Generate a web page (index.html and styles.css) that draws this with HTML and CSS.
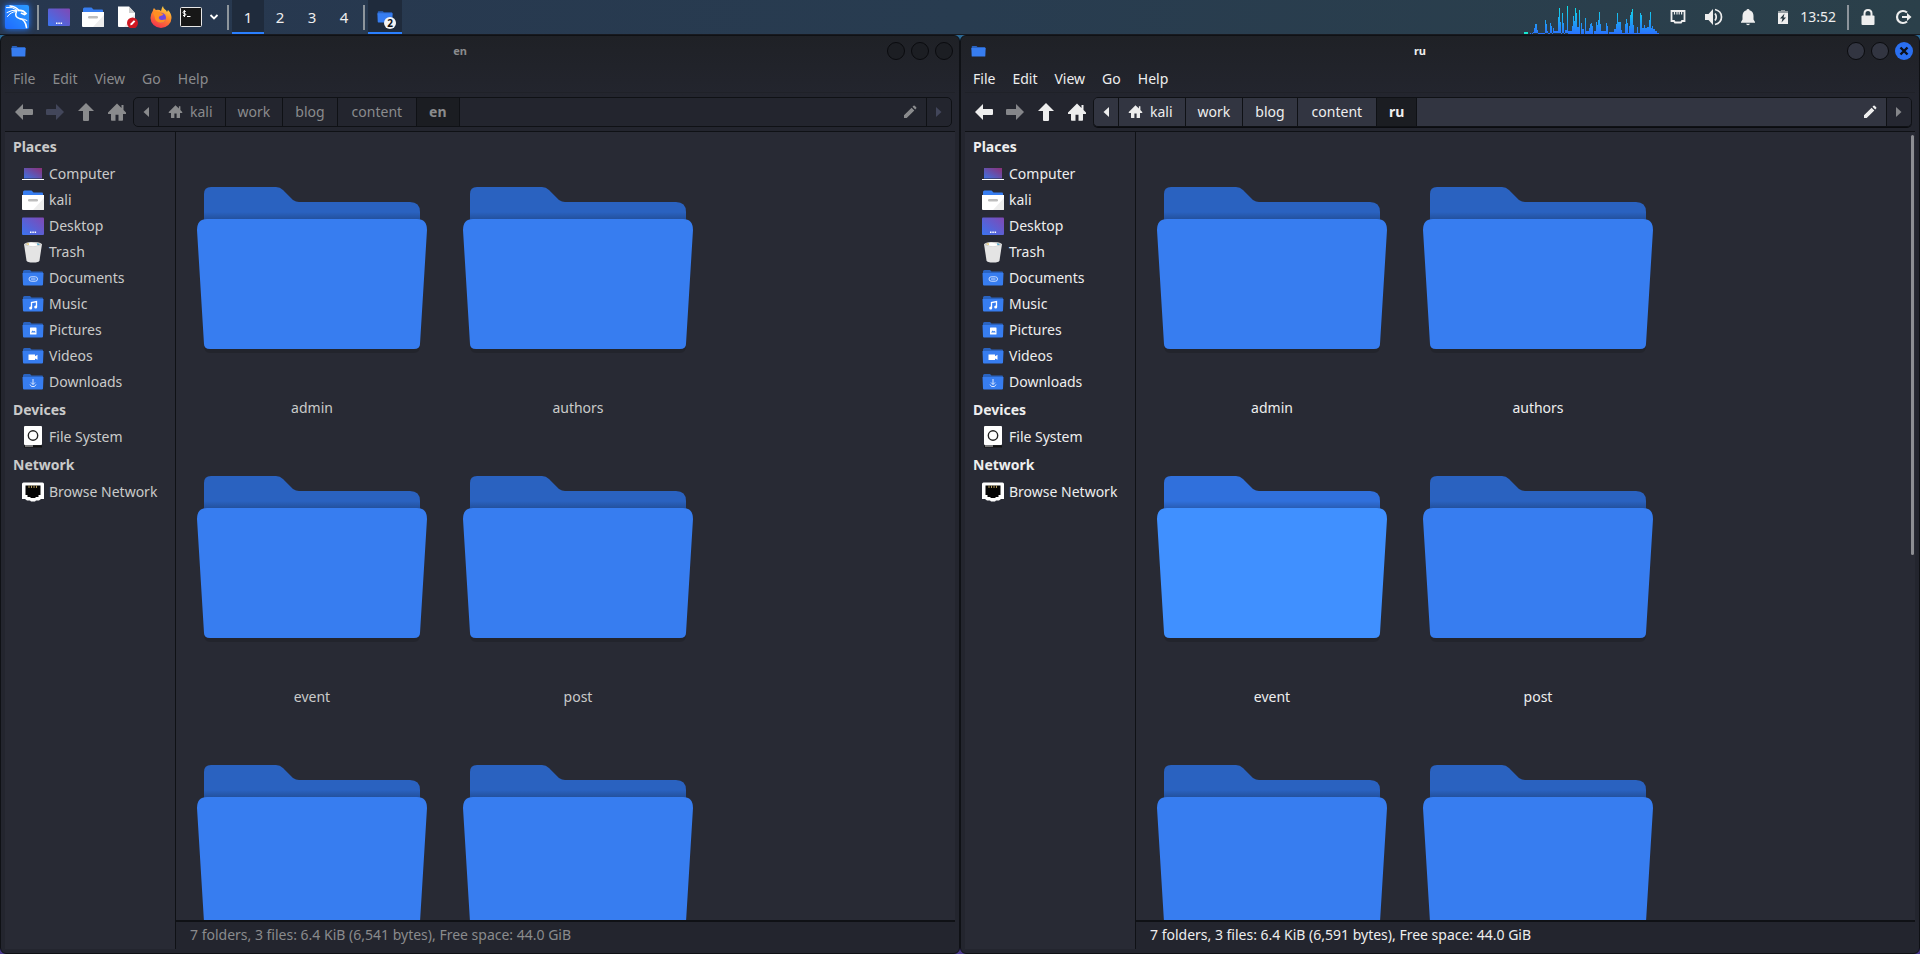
FILE: index.html
```
<!DOCTYPE html>
<html lang="en">
<head>
<meta charset="utf-8">
<title>Desktop</title>
<link rel="stylesheet" href="styles.css">
</head>
<body>
<svg class="defs" aria-hidden="true">
  <defs>
    <linearGradient id="g-desk" x1="0" y1="1" x2="1" y2="0"><stop offset="0" stop-color="#3a74f0"/><stop offset="1" stop-color="#8148b4"/></linearGradient>
    <linearGradient id="g-comp" x1="0" y1="1" x2="1" y2="0"><stop offset="0" stop-color="#3d72e0"/><stop offset="1" stop-color="#8e2f78"/></linearGradient>
    <linearGradient id="g-kali" x1="0" y1="1" x2="1" y2="0"><stop offset="0" stop-color="#1f6bff"/><stop offset="1" stop-color="#2b9bff"/></linearGradient>
    <linearGradient id="g-fox" x1="0.8" y1="0" x2="0.3" y2="1"><stop offset="0" stop-color="#ffe14a"/><stop offset="0.45" stop-color="#ff8a2a"/><stop offset="1" stop-color="#f5304f"/></linearGradient>
    <linearGradient id="g-cpu" gradientUnits="userSpaceOnUse" x1="0" y1="6" x2="0" y2="34"><stop offset="0" stop-color="#0fe0e6"/><stop offset="1" stop-color="#2a72ff"/></linearGradient>
    <linearGradient id="g-shade" x1="0" y1="0" x2="0" y2="1"><stop offset="0" stop-color="#000" stop-opacity="0"/><stop offset="1" stop-color="#000" stop-opacity="0.2"/></linearGradient>
  </defs>
  <symbol id="folder" viewBox="0 0 256 256">
    <path d="M20 190v16q0 7 6 7H230q6 0 6-7v-16z" fill="#000" opacity=".14"/>
    <path class="back" d="M20 90V54q0-7 7-7H92q4 0 7 3L109 60q3 2 6 2H226q10 0 10 10V90z"/>
    <path d="M20 72H236V80H20z" fill="url(#g-shade)"/>
    <path class="front" d="M23 79H233Q243 79 243 90L236 204Q236 209 230 209H26Q20 209 20 204L13 90Q13 79 23 79z"/>
  </symbol>
  <symbol id="mini" viewBox="0 0 22 22"><path d="M1 4.500q0-1.500 1.500-1.500H8l1.500 1.500H20q1 0 1 1V8H1z" fill="#2a63c0"/><path d="M.5 6H21.500L21 17.500q0 1-1 1H2q-1 0-1-1z" fill="#377df0"/></symbol>
  <symbol id="computer" viewBox="0 0 22 22"><path d="M2 5H20V15.500H2z" fill="url(#g-comp)"/><path d="M0 16H22V17H0z" fill="#fff"/></symbol>
  <symbol id="homefolder" viewBox="0 0 22 22"><path d="M1 3q0-1.500 1.500-1.500H9.500L11.500 3.500H20q1 0 1 1V8H1z" fill="#377df0"/><path d="M0 6H22V20q0 1-1 1H1q-1 0-1-1z" fill="#fff"/><path d="M22 9V20q0 1-1 1H11z" fill="#ededed"/><rect x="6" y="10" width="10" height="2.400" rx="1.200" fill="#bdbdbd"/></symbol>
  <symbol id="desktop" viewBox="0 0 22 22"><rect x="0" y="2.500" width="22" height="17.500" rx="1" fill="url(#g-desk)"/><path d="M8 16.500h1.500v1.500H8zM10.300 16.500h1.500v1.500h-1.500zM12.600 16.500h1.500v1.500h-1.500z" fill="#fff"/></symbol>
  <symbol id="trash" viewBox="0 0 22 22"><path d="M2 3Q11-1 20 3L17.500 19.500q-.5 2-6.500 2t-6.500-2z" fill="#e4e4e4"/><ellipse cx="11" cy="3.200" rx="8.500" ry="2.300" fill="#c9c9c9"/><path d="M4.500 3.200q2-2 6-1.500t7 1.500q-2 2-6.500 2t-6.500-2z" fill="#fff"/><path d="M4 3l2.500-1 .5 2z" fill="#e8c860"/><path d="M15 2.300l3 .9-2.500 1z" fill="#3f9fc8"/></symbol>
  <symbol id="documents" viewBox="0 0 22 22"><use href="#mini"/><rect x="7" y="9.800" width="8.500" height="4.400" rx="2.200" fill="none" stroke="#cfe0ff"/><path d="M9 12h4.500" stroke="#cfe0ff"/></symbol>
  <symbol id="music" viewBox="0 0 22 22"><use href="#mini"/><path d="M9.500 15V9.500l5-1V14" fill="none" stroke="#fff" stroke-width="1.300"/><circle cx="8.700" cy="15" r="1.500" fill="#fff"/><circle cx="13.700" cy="14" r="1.500" fill="#fff"/></symbol>
  <symbol id="pictures" viewBox="0 0 22 22"><use href="#mini"/><rect x="8" y="8.500" width="6.500" height="7" rx=".5" fill="#fff"/><path d="M9 13.500l1.700-2 1.200 1 .8-.7 1 1.700z" fill="#377df0"/></symbol>
  <symbol id="videos" viewBox="0 0 22 22"><use href="#mini"/><path d="M6.500 9.500h6.500v1.700l2.500-1.400v5L13 13.400V15H6.500z" fill="#fff"/></symbol>
  <symbol id="downloads" viewBox="0 0 22 22"><use href="#mini"/><path d="M11 8v5.500M9 11.500l2 2 2-2M8 13.500l1.500 2h3l1.500-2" fill="none" stroke="#dbe8ff"/></symbol>
  <symbol id="drive" viewBox="0 0 22 22"><rect x="2" y="0" width="18" height="19" rx="1" fill="#fff"/><circle cx="11" cy="9.500" r="4.700" fill="none" stroke="#222" stroke-width="1.400"/><path d="M2 19.500H20V21.500H2z" fill="#111"/><path d="M3 20h8" stroke="#ddd"/></symbol>
  <symbol id="netfolder" viewBox="0 0 22 22"><path d="M1.500 1.500h19q1.500 0 1.500 1.500V18h-3l-2 1.500h-3L13 20.500H9l-1-1H5L3 18H0V3Q0 1.500 1.500 1.500z" fill="#fff"/><path d="M3.500 4.500h15V14h-2v2h-3v1h-5v-1h-3v-2h-2z" fill="#050505"/><path d="M7 4.500v2.500M9.500 4.500v2.500M12 4.500v2.500M14.500 4.500v2.500" stroke="#d8b96a" stroke-width=".8"/></symbol>
  <symbol id="arrow" viewBox="0 0 20 20"><path d="M1 10L9 2v5h9q1 0 1 1v4q0 1-1 1H9v5z"/></symbol>
  <symbol id="house" viewBox="0 0 20 20"><path d="M10 1.500L1 10.500V12h3v6q0 .8.800.8H8.500v-6h3v6h3.700q.8 0 .8-.8v-6h3v-1.500L16.500 8V3h-2v3z"/></symbol>
  <symbol id="pencil" viewBox="0 0 14 14"><path d="M1 13V10.300L8.600 2.700l2.700 2.700L3.700 13zM9.500 1.800l1-1q.6-.5 1.200 0l1.500 1.500q.5.600 0 1.200l-1 1z"/></symbol>
  <symbol id="tri" viewBox="0 0 6 10"><path d="M0 0L5.500 5 0 10z"/></symbol>
</svg>

<header class="panel">
  <button class="kali" aria-label="Applications"><svg viewBox="0 0 26 26"><rect x="1" y="1" width="24" height="24" rx="2" fill="url(#g-kali)"/><g fill="none" stroke="#fff" stroke-linecap="round"><path d="M2.500 3.500q6-1 10.500 2.500M3 8.500q5-3 10-2M3.500 12.500q3-4.500 8.500-5" stroke-width="1"/><path d="M6 2q6 .5 9 4.500" stroke-width="1.400"/><path d="M14.500 6.500q4.500-.8 7.500 3l-1.500 1-3-1.200" stroke-width="1.700"/><path d="M12.500 7.500q-2.500 5.500 3 7 6 1 7 9" stroke-width="1.600"/><path d="M16 14.800q5 0 7 1.700" stroke-width="1"/></g></svg></button>
  <span class="rule"></span>
  <nav class="launch" aria-label="Launchers">
    <button aria-label="Show desktop"><svg><use href="#desktop"/></svg></button>
    <button aria-label="File manager"><svg><use href="#homefolder"/></svg></button>
    <button aria-label="Text editor"><svg viewBox="0 0 22 22"><path d="M2 .5H13L19 7V20q0 1-1 1H3q-1 0-1-1z" fill="#fff"/><path d="M13 .5L19 7h-6z" fill="#cfcfcf"/><path d="M19 8V20q0 1-1 1H8z" fill="#ececec"/><circle cx="16.500" cy="17" r="5.500" fill="#cf1822"/><path d="M14.300 19.200l.3-1.700 3.300-3.300 1.400 1.400-3.300 3.300z" fill="#fff"/></svg></button>
    <button aria-label="Firefox"><svg viewBox="0 0 22 22"><path d="M13 0q0 2 2 3.500 1.500.8 2 2.500l1-2q3.500 3.500 3.500 8a10.500 10 0 0 1-21 0Q.5 8 3 4.500q0-1.500 1-2.500 1 1.500 2 2 3-1 5 1Q11.500 2 13 0z" fill="url(#g-fox)"/><circle cx="11" cy="11.800" r="5" fill="#6d48e0"/><path d="M3 6.500q4-2 8 .5l2.500 1q-.5 1.500-2.500 1.700-2.500.3-2.300 2.300.8 2.500 3.500 2 2-.8 3.500-.5-1.500 3.500-5.500 3.200-5.500-1-5.500-6-1-2-1.700-4.200z" fill="#ff8f22"/></svg></button>
    <button class="term" aria-label="Terminal"><svg viewBox="0 0 22 22"><rect x=".5" y="1.500" width="21" height="19" rx="1" fill="#171717" stroke="#e8e8e8"/><g fill="none" stroke="#fff"><path d="M5.800 5.500Q3 4.700 3 6.300q0 1.200 1.400 1.200T5.800 8.800Q5.500 10.200 3 9.500M4.400 4v7M7 10.500h3.500"/></g></svg></button>
    <button class="more" aria-label="More terminals"><svg viewBox="0 0 10 6"><path d="M1.500 1L5 4.500 8.500 1" fill="none" stroke="#fff" stroke-width="1.800"/></svg></button>
  </nav>
  <span class="rule"></span>
  <nav class="spaces" aria-label="Workspaces"><button class="on">1</button><button>2</button><button>3</button><button>4</button></nav>
  <span class="rule"></span>
  <button class="task on" aria-label="File windows"><svg><use href="#mini"/></svg><span class="badge">2</span></button>

  <div class="tray">
    <svg class="graph" viewBox="0 0 135 34" role="img" aria-label="CPU load"><path d="M0 32h4v2H0z" fill="#18e6d0"/><path fill="url(#g-cpu)" d="M6 33h1v1H6zM8 33V34H44V33H8zM9 32h1v2H9zM10 28h1v6h-1zM11 24h2v10h-2zM13 30h1v4h-1zM21 20h1v14h-1zM22 24h1v10h-1zM23 31h1v3h-1zM26 23h1v11h-1zM27 26h1v8h-1zM29 28h1v6h-1zM30 31h4v3h-4zM34 17h1v17h-1zM35 8h1v26h-1zM36 22h1v12h-1zM38 13h1v21h-1zM39 23h1v11h-1zM41 30h2v4h-2zM43 6h1v28h-1zM44 31h4v3h-4zM48 26h1v8h-1zM49 16h1v18h-1zM50 21h1v13h-1zM51 8h1v26h-1zM52 13h1v21h-1zM53 27h2v7h-2zM55 10h1v24h-1zM57 23h1v11h-1zM58 29h2v5h-2zM61 18h1v16h-1zM62 31h3v3h-3zM65 28h1v6h-1zM66 24h1v10h-1zM67 23h1v11h-1zM68 26h1v8h-1zM70 31h2v3h-2zM72 22h1v12h-1zM73 25h1v9h-1zM74 20h1v14h-1zM75 12h1v22h-1zM76 24h1v10h-1zM77 31h5v3h-5zM82 23h1v11h-1zM83 26h1v8h-1zM85 32h7v2h-7zM90 29h2v5h-2zM92 24h1v10h-1zM93 13h1v21h-1zM94 22h3v12h-3zM97 30h1v4h-1zM101 24h1v10h-1zM102 19h1v15h-1zM103 23h1v11h-1zM105 26h1v8h-1zM106 15h1v19h-1zM107 12h1v22h-1zM108 9h1v25h-1zM109 25h1v9h-1zM113 27h1v7h-1zM116 13h1v21h-1zM117 15h1v19h-1zM118 28h2v6h-2zM120 25h1v9h-1zM121 28h2v6h-2zM123 27h2v7h-2zM125 20h1v14h-1zM126 12h1v22h-1zM127 28h1v6h-1zM128 26h1v8h-1zM129 29h2v5h-2zM131 31h2v3h-2zM133 33h2v1h-2zM96 33h30v1H96z"/></svg>
    <button aria-label="Network"><svg viewBox="0 0 20 20"><path d="M3.500 4h13v10H14l-1 1.500H7L6 14H3.500z" fill="none" stroke="#eee" stroke-width="1.800"/><path d="M6.500 4v3.500M9 4v3.500M11.200 4v3.500M13.600 4v3.500" stroke="#eee" stroke-width="1.200"/></svg></button>
    <button aria-label="Volume"><svg viewBox="0 0 20 20"><path d="M2 7h3.500L10 2v16l-4.500-5H2z" fill="#eee"/><path d="M12 6.500q2.500 3.500 0 7M12 2.500q6.500 1.500 6.500 7.500T12 17.500" fill="none" stroke="#eee" stroke-width="1.700"/></svg></button>
    <button aria-label="Notifications"><svg viewBox="0 0 20 20"><path d="M10 2q1.500 0 1.500 1.300Q15.500 4.500 15.500 9v3.500L17 15v.8H3V15l1.500-2.500V9q0-4.500 4-5.700Q8.500 2 10 2zM8 16.800h4q-.5 1.400-2 1.400t-2-1.400z" fill="#eee"/></svg></button>
    <button aria-label="Battery"><svg viewBox="0 0 20 20"><path d="M8 3h4v1.500h3V17H5V4.500h3z" fill="#eee"/><path d="M5 4.500h3V3h4v1.500h3V6H5z" fill="#939ba0"/><path d="M11.500 6.500L7 11.500h2.500L8.500 15.500l4.500-5h-2.500z" fill="#26363f"/></svg></button>
    <time class="clock">13:52</time>
    <span class="rule"></span>
    <button aria-label="Lock"><svg viewBox="0 0 20 20"><path d="M6.500 9V6.500q0-3.500 3.500-3.500t3.500 3.500V9" fill="none" stroke="#eee" stroke-width="2"/><rect x="3.500" y="8.500" width="13" height="9.500" rx="1" fill="#eee"/></svg></button>
    <button aria-label="Log out"><svg viewBox="0 0 20 20"><path d="M14 5.500A6 6 0 1 0 14 14.500" fill="none" stroke="#eee" stroke-width="2.200"/><path d="M9 9h5V6l4.500 4-4.500 4v-3H9z" fill="#eee"/></svg></button>
  </div>
</header>

<main class="screen">
  <section class="window idle">
    <header class="title"><svg class="app"><use href="#mini"/></svg><h1>en</h1><div class="controls"><button aria-label="Minimize"></button><button aria-label="Maximize"></button><button aria-label="Close"></button></div></header>
    <nav class="menu"><button>File</button><button>Edit</button><button>View</button><button>Go</button><button>Help</button></nav>
    <div class="tools">
      <div class="nav"><button aria-label="Back"><svg><use href="#arrow"/></svg></button><button class="off" aria-label="Forward"><svg class="flip"><use href="#arrow"/></svg></button><button aria-label="Up"><svg class="up"><use href="#arrow"/></svg></button><button aria-label="Home"><svg><use href="#house"/></svg></button></div>
      <div class="path"><button class="step" aria-label="Scroll left"><svg class="tri flip"><use href="#tri"/></svg></button><button class="first"><svg><use href="#house"/></svg>kali</button><button>work</button><button>blog</button><button class="wide">content</button><button class="here">en</button><button class="edit" aria-label="Edit path"><svg><use href="#pencil"/></svg></button><button class="step off" aria-label="Scroll right"><svg class="tri"><use href="#tri"/></svg></button></div>
    </div>
    <div class="body">
      <aside class="side">
        <h2>Places</h2>
        <a href="#"><svg><use href="#computer"/></svg>Computer</a>
        <a href="#"><svg><use href="#homefolder"/></svg>kali</a>
        <a href="#"><svg><use href="#desktop"/></svg>Desktop</a>
        <a href="#"><svg><use href="#trash"/></svg>Trash</a>
        <a href="#"><svg><use href="#documents"/></svg>Documents</a>
        <a href="#"><svg><use href="#music"/></svg>Music</a>
        <a href="#"><svg><use href="#pictures"/></svg>Pictures</a>
        <a href="#"><svg><use href="#videos"/></svg>Videos</a>
        <a href="#"><svg><use href="#downloads"/></svg>Downloads</a>
        <h2>Devices</h2>
        <a href="#"><svg><use href="#drive"/></svg>File System</a>
        <h2>Network</h2>
        <a href="#"><svg><use href="#netfolder"/></svg>Browse Network</a>
      </aside>
      <div class="content">
        <div class="files">
          <a href="#" class="file"><svg><use href="#folder"/></svg>admin</a>
          <a href="#" class="file"><svg><use href="#folder"/></svg>authors</a>
          <a href="#" class="file"><svg><use href="#folder"/></svg>event</a>
          <a href="#" class="file"><svg><use href="#folder"/></svg>post</a>
          <a href="#" class="file" aria-label="Folder"><svg><use href="#folder"/></svg></a>
          <a href="#" class="file" aria-label="Folder"><svg><use href="#folder"/></svg></a>
        </div>
        <footer class="status">7 folders, 3 files: 6.4 KiB (6,541 bytes), Free space: 44.0 GiB</footer>
      </div>
    </div>
  </section>

  <section class="window active">
    <header class="title"><svg class="app"><use href="#mini"/></svg><h1>ru</h1><div class="controls"><button aria-label="Minimize"></button><button aria-label="Maximize"></button><button class="close" aria-label="Close"><svg viewBox="0 0 18 18"><path d="M5.500 5.500l7 7M12.500 5.500l-7 7" stroke="#0c1018" stroke-width="2.400"/></svg></button></div></header>
    <nav class="menu"><button>File</button><button>Edit</button><button>View</button><button>Go</button><button>Help</button></nav>
    <div class="tools">
      <div class="nav"><button aria-label="Back"><svg><use href="#arrow"/></svg></button><button class="off" aria-label="Forward"><svg class="flip"><use href="#arrow"/></svg></button><button aria-label="Up"><svg class="up"><use href="#arrow"/></svg></button><button aria-label="Home"><svg><use href="#house"/></svg></button></div>
      <div class="path"><button class="step" aria-label="Scroll left"><svg class="tri flip"><use href="#tri"/></svg></button><button class="first"><svg><use href="#house"/></svg>kali</button><button>work</button><button>blog</button><button class="wide">content</button><button class="here">ru</button><button class="edit" aria-label="Edit path"><svg><use href="#pencil"/></svg></button><button class="step off" aria-label="Scroll right"><svg class="tri"><use href="#tri"/></svg></button></div>
    </div>
    <div class="body">
      <aside class="side">
        <h2>Places</h2>
        <a href="#"><svg><use href="#computer"/></svg>Computer</a>
        <a href="#"><svg><use href="#homefolder"/></svg>kali</a>
        <a href="#"><svg><use href="#desktop"/></svg>Desktop</a>
        <a href="#"><svg><use href="#trash"/></svg>Trash</a>
        <a href="#"><svg><use href="#documents"/></svg>Documents</a>
        <a href="#"><svg><use href="#music"/></svg>Music</a>
        <a href="#"><svg><use href="#pictures"/></svg>Pictures</a>
        <a href="#"><svg><use href="#videos"/></svg>Videos</a>
        <a href="#"><svg><use href="#downloads"/></svg>Downloads</a>
        <h2>Devices</h2>
        <a href="#"><svg><use href="#drive"/></svg>File System</a>
        <h2>Network</h2>
        <a href="#"><svg><use href="#netfolder"/></svg>Browse Network</a>
      </aside>
      <div class="content">
        <div class="files">
          <a href="#" class="file"><svg><use href="#folder"/></svg>admin</a>
          <a href="#" class="file"><svg><use href="#folder"/></svg>authors</a>
          <a href="#" class="file lit"><svg><use href="#folder"/></svg>event</a>
          <a href="#" class="file"><svg><use href="#folder"/></svg>post</a>
          <a href="#" class="file" aria-label="Folder"><svg><use href="#folder"/></svg></a>
          <a href="#" class="file" aria-label="Folder"><svg><use href="#folder"/></svg></a>
          <span class="thumb"></span>
        </div>
        <footer class="status">7 folders, 3 files: 6.4 KiB (6,591 bytes), Free space: 44.0 GiB</footer>
      </div>
    </div>
  </section>
</main>
</body>
</html>
```
FILE: styles.css
```
* { box-sizing: border-box; margin: 0; }
body {
  height: 100vh;
  display: flex;
  flex-direction: column;
  overflow: hidden;
  background: linear-gradient(#2a6a94, #4a3a8c);
  font: 14px/20px "Noto Sans", sans-serif;
  color: #eee;
}
button { border: 0; padding: 0; background: none; color: inherit; font: inherit; display: flex; align-items: center; justify-content: center; }
a { color: inherit; text-decoration: none; }
svg { display: block; flex: none; width: 22px; height: 22px; }
.defs { position: absolute; width: 0; height: 0; }

/* top panel */
.panel { height: 35px; flex: none; display: flex; align-items: stretch; border-bottom: 1px solid #17191f; background: linear-gradient(90deg, #27374f, #283c50 50%, #2b404a); }
.panel .rule { width: 2px; height: 25px; align-self: center; background: #8d959c; }
.kali { width: 34px; margin-right: 3px; }
.kali svg { width: 26px; height: 26px; filter: drop-shadow(0 0 3px #2277ff); }
.launch { display: flex; padding-left: 9px; gap: 12px; margin-right: 8px; }
.launch .term { margin-left: -4px; }
.launch .more { width: 10px; margin-left: -5px; }
.launch .more svg { width: 10px; height: 6px; }
.spaces { display: flex; margin: 0 3px; }
.spaces button { width: 32px; font-size: 15px; }
.panel .on { background: #1f2b3c; box-shadow: inset 0 -2px #2a7fff; }
.task { position: relative; width: 34px; margin-left: 3px; }
.task svg { width: 16px; height: 16px; }
.badge { position: absolute; left: 16px; top: 17px; width: 12px; height: 12px; border-radius: 50%; background: #f4f4f4; color: #111; font: bold 10px/12px "Noto Sans", sans-serif; text-align: center; }
.tray { margin-left: auto; display: flex; align-items: stretch; }
.tray svg { width: 20px; height: 20px; }
.tray button { width: 35px; }
.tray .graph { width: 135px; height: 34px; margin-right: 1px; }
.clock { align-self: center; margin-right: 11px; }
.tray .rule { margin-right: 1px; }

/* windows */
.screen { flex: 1; min-height: 0; display: grid; grid-template-columns: 1fr 1fr; }
.window { display: flex; flex-direction: column; min-width: 0; min-height: 0; padding: 0 4px 4px; border: 1px solid #0f1115; border-radius: 6px; background: linear-gradient(#1f2126, #23252e 60px); }
.title { height: 30px; flex: none; display: grid; grid-template-columns: 1fr auto 1fr; align-items: center; padding: 0 2px 0 6px; }
.title .app { width: 15px; height: 15px; }
.title h1 { font-size: 11px; line-height: 16px; font-weight: 700; padding-right: 44px; }
.controls { display: flex; gap: 6px; justify-content: flex-end; }
.controls button { width: 18px; height: 18px; border: 1px solid #0a0b0e; border-radius: 50%; background: #1c1e23; }
.controls .close { border: 0; background: #2a6ff0; }
.controls svg { width: 18px; height: 18px; }
.menu { display: flex; gap: 1px; height: 27px; flex: none; border-bottom: 1px solid #1f2128; }
.menu button { padding: 0 8px; }
.tools { height: 39px; flex: none; display: flex; align-items: center; border-bottom: 1px solid #0f1115; padding: 0 3px 1px; }
.nav { display: flex; width: 125px; }
.nav button { width: 31px; }
.nav svg { width: 20px; height: 20px; }
.tools svg { fill: currentColor; }
.flip { transform: scaleX(-1); }
.up { transform: rotate(90deg); }
.path { flex: 1; display: flex; height: 30px; border: 1px solid #0f1115; border-radius: 5px; overflow: hidden; }
.path button { padding: 0 12px; border-right: 1px solid #0f1115; }
.path .first { padding: 0 12px 0 9px; gap: 7px; }
.path .first svg { width: 15px; height: 15px; }
.path .wide { padding: 0 14px; }
.path .step { width: 25px; padding: 0; }
.path .step:last-child { width: 24px; border: 0; }
.path .here { font-weight: 700; background: #1b1d22; }
.path .edit { flex: 1; justify-content: flex-end; padding: 0 9px; }
.path .edit svg { width: 14px; height: 14px; }
.path .tri { width: 6px; height: 10px; }
.body { flex: 1; min-height: 0; display: flex; background: #282a34; }
.side { width: 171px; flex: none; border-right: 1px solid #0f1115; }
.side h2 { font-size: 14px; line-height: 29px; padding-left: 8px; font-weight: 700; }
.side a { display: flex; align-items: center; gap: 5px; height: 26px; padding: 0 0 1px 17px; white-space: nowrap; }
.content { flex: 1; min-width: 0; display: flex; flex-direction: column; }
.files { position: relative; flex: 1; min-height: 0; overflow: hidden; display: grid; grid-template-columns: 266px 266px; grid-auto-rows: 289px; padding: 8px 3px 0; align-content: start; }
.file { display: flex; flex-direction: column; align-items: center; gap: 2px; }
.file svg { width: 256px; height: 256px; --back: #2a62c0; --front: #377df0; }
.back { fill: var(--back); }
.front { fill: var(--front); }
.file.lit svg { --back: #3070dc; --front: #4090ff; }
.thumb { position: absolute; top: 3px; right: 1px; width: 3px; height: 420px; border-radius: 2px; background: #8c8d92; }
.status { height: 29px; flex: none; border-top: 2px solid #0f1115; background: #23252e; padding: 3px 14px; white-space: nowrap; }

.idle { color: #8a8b8d; }
.idle .side, .idle .file { color: #cacaca; }
.idle .nav .off, .idle .path .off { color: #42465a; }
.active .off { color: #85868a; }
.active .path { box-shadow: 0 1px #0b0c10; }
.active .path button { background: #323541; }
.active .path .here { background: #1b1d22; }
.active .path .step.off { background: #252731; }
.active .controls button { background: #323541; }
.active .controls .close { background: #2a6ff0; }
```
